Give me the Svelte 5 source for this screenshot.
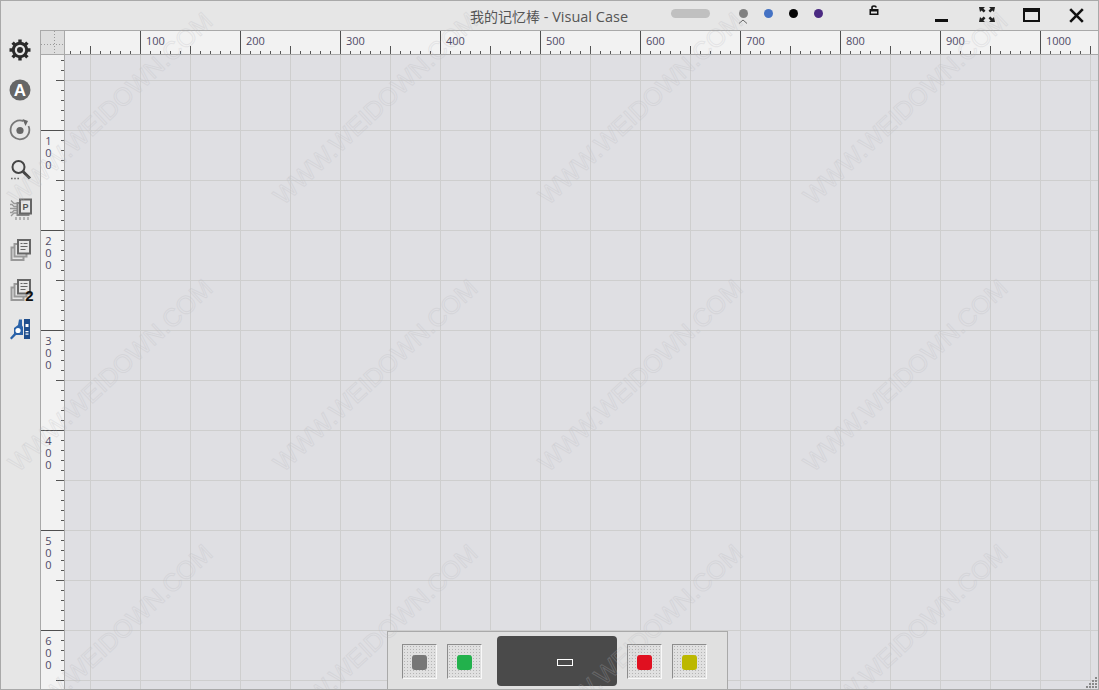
<script>
  // ruler origin is x=40, y=30 in window coordinates
  const hTicks = [];
  for (let x = 70; x < 1099; x += 10) {
    const v = x - 40;
    hTicks.push({ x, kind: v % 100 === 0 ? "major" : v % 50 === 0 ? "half" : "minor" });
  }
  const hLabels = [];
  for (let v = 100; v <= 1000; v += 100) hLabels.push(v);

  const vTicks = [];
  for (let y = 60; y < 689; y += 10) {
    const v = y - 30;
    vTicks.push({ y, kind: v % 100 === 0 ? "major" : v % 50 === 0 ? "half" : "minor" });
  }
  const vLabels = [100, 200, 300, 400, 500, 600];

  const tickLen = { major: 24, half: 8, minor: 3 };

  const swatchesLeft = ["#777777", "#22b14c"];
  const swatchesRight = ["#e01020", "#bcb800"];

  const marks = [];
  for (const cy of [108, 375, 640]) {
    for (const cx of [110, 375, 640, 905]) marks.push({ cx, cy });
  }

  const grip = [
    [9, 0],
    [6, 3], [9, 3],
    [3, 6], [6, 6], [9, 6],
    [0, 9], [3, 9], [6, 9], [9, 9]
  ];
</script>

<div class="window">
  <header class="titlebar">
    <span class="title">我的记忆棒<span class="latin">{" - Visual Case"}</span></span>
    <span class="pill"></span>
    <span class="handle">
      <i class="dot grey"></i>
      <svg width="10" height="5" viewBox="0 0 10 5"><path d="M1 4.5 5 1l4 3.5" fill="none" stroke="#666" /></svg>
    </span>
    <i class="dot blue"></i>
    <i class="dot black"></i>
    <i class="dot purple"></i>
    <svg class="lock" width="10" height="10" viewBox="0 0 10 10">
      <path d="M3 4.500V2.500Q3 1 5 1t2 1.500" fill="none" stroke="#111" stroke-width="1.6" />
      <path d="M0.5 4h9v6h-9z M2 6.500v2h6v-2z" fill="#111" fill-rule="evenodd" />
    </svg>
    <svg class="min" width="13" height="3"><rect width="13" height="3" fill="#111" /></svg>
    <svg class="full" width="16" height="15" viewBox="0 0 16 15" fill="#222">
      <path d="M0 0h6L4.4 1.6 6.5 3.7 4.7 5.5 2.6 3.4 1 5z" />
      <path d="M16 0h-6l1.6 1.6-2.1 2.1 1.8 1.8 2.1-2.1L15 5z" />
      <path d="M0 15h6l-1.6-1.6 2.1-2.1-1.8-1.8-2.1 2.1L1 10z" />
      <path d="M16 15h-6l1.6-1.6-2.1-2.1 1.8-1.8 2.1 2.1L15 10z" />
    </svg>
    <svg class="max" width="17" height="14" viewBox="0 0 17 14">
      <path d="M0 0h17v14H0z M2 4v8h13V4z" fill="#111" fill-rule="evenodd" />
    </svg>
    <svg class="close" width="15" height="15" viewBox="0 0 15 15">
      <path d="M1.2 1.2l12.6 12.6M13.8 1.2 1.2 13.8" stroke="#111" stroke-width="2.6" />
    </svg>
  </header>

  <div class="body">
    <nav class="tools">
      <!-- settings -->
      <svg viewBox="0 0 24 24">
        <g stroke="#2b2b2b" stroke-width="3.4">
          <path d="M12 1.5v21M1.5 12h21M4.6 4.6l14.8 14.8M19.4 4.6 4.6 19.4" />
        </g>
        <circle cx="12" cy="12" r="8.2" fill="#2b2b2b" />
        <circle cx="12" cy="12" r="5.2" fill="#e6e6e6" />
        <circle cx="12" cy="12" r="3" fill="#2b2b2b" />
      </svg>
      <!-- account -->
      <svg viewBox="0 0 24 24">
        <circle cx="12" cy="12" r="10.5" fill="#666" />
        <text x="12" y="18" class="glyph-a">A</text>
      </svg>
      <!-- sync -->
      <svg viewBox="0 0 24 24">
        <path d="M15.5 3.2A9.4 9.4 0 1 0 20.5 8" fill="none" stroke="#777" stroke-width="1.8" />
        <path d="M14.5 1 20 3l-2.5 5z" fill="#666" />
        <circle cx="12" cy="12.5" r="3.6" fill="#666" />
      </svg>
      <!-- search -->
      <svg viewBox="0 0 24 24">
        <circle cx="10.5" cy="9" r="6" fill="none" stroke="#444" stroke-width="2" />
        <path d="M15 13.5l7 7" stroke="#444" stroke-width="3" />
        <path d="M3 20.5h1.6M6.2 20.5h1.6M9.4 20.5h1.6" stroke="#666" stroke-width="1.6" />
      </svg>
      <!-- chip -->
      <svg viewBox="0 0 24 24">
        <path d="M3 2.5l3 3h6M2 6.5h2l2 2h5M2 10.5h9M2 14.5h2l2-2h5M3 18l3-3h6M8 22v-3M12 22v-3M16 22v-3M20 22v-3" fill="none" stroke="#999" stroke-width="1.3" />
        <rect x="9.5" y="5" width="11" height="12" fill="#e6e6e6" stroke="#888" stroke-width="2" />
        <rect x="12" y="1.5" width="11" height="14" fill="#e6e6e6" stroke="#666" stroke-width="2" />
        <text x="17.5" y="12" class="glyph-p">P</text>
      </svg>
      <!-- pages -->
      <svg viewBox="0 0 24 24">
        <rect x="3.5" y="9.5" width="12" height="12.5" fill="none" stroke="#999" stroke-width="2" />
        <rect x="6.5" y="6" width="12" height="12.5" fill="#e6e6e6" stroke="#999" stroke-width="2" />
        <rect x="10" y="2" width="12" height="13.5" fill="#e6e6e6" stroke="#666" stroke-width="2" />
        <path d="M12.5 5.5h2M15.5 5.5h4M12.5 8.5h7M12.5 11.5h5" stroke="#666" stroke-width="1.1" />
      </svg>
      <!-- pages 2 -->
      <svg viewBox="0 0 24 24" class="overflow">
        <rect x="3.5" y="9.5" width="12" height="12.5" fill="none" stroke="#999" stroke-width="2" />
        <rect x="6.5" y="6" width="12" height="12.5" fill="#e6e6e6" stroke="#999" stroke-width="2" />
        <rect x="10" y="2" width="12" height="13.5" fill="#e6e6e6" stroke="#666" stroke-width="2" />
        <path d="M12.5 5.5h2M15.5 5.5h4M12.5 8.5h7M12.5 11.5h5" stroke="#666" stroke-width="1.1" />
        <text x="21.5" y="23" class="glyph-2">2</text>
      </svg>
      <!-- tool -->
      <svg viewBox="0 0 24 24">
        <rect x="16" y="1" width="6" height="20" fill="#1f4e8c" />
        <rect x="17.5" y="6" width="3" height="3" fill="#fff" />
        <rect x="17.5" y="13" width="3" height="1.2" fill="#fff" />
        <rect x="17.5" y="15.5" width="3" height="1.2" fill="#fff" />
        <path d="M11 1.5h3v6l1 1.5v8H8l-4.500 4.500L2 20l4-4.500V10l4-3z" fill="#2a62a8" />
        <circle cx="10" cy="12.5" r="2.6" fill="#fff" />
      </svg>
    </nav>

    <div class="stage">
      <div class="top-row">
        <div class="corner"></div>
        <svg class="hruler" width="1034" height="23" viewBox="65 31 1034 23">
          {#each hTicks as t}
            <line class={t.kind} x1={t.x + 0.5} x2={t.x + 0.5} y1={54 - tickLen[t.kind]} y2="54" />
          {/each}
          {#each hLabels as v}
            <text x={v + 46} y="45">{v}</text>
          {/each}
        </svg>
      </div>
      <div class="bottom-row">
        <svg class="vruler" width="23" height="634" viewBox="41 55 23 634">
          {#each vTicks as t}
            <line class={t.kind} y1={t.y + 0.5} y2={t.y + 0.5} x1={64 - tickLen[t.kind]} x2="64" />
          {/each}
          {#each vLabels as v}
            {#each String(v) as ch, i}
              <text x="48.500" y={v + 45 + i * 12} text-anchor="middle">{ch}</text>
            {/each}
          {/each}
        </svg>
        <div class="canvas"></div>
      </div>
    </div>
  </div>

  <div class="palette">
    {#each swatchesLeft as c}
      <div class="well"><span style="background:{c}"></span></div>
    {/each}
    <div class="screen"><span></span></div>
    {#each swatchesRight as c}
      <div class="well"><span style="background:{c}"></span></div>
    {/each}
  </div>

  <svg class="grip" width="11" height="11" viewBox="0 0 11 11">
    {#each grip as [x, y]}
      <rect {x} {y} width="2" height="2" fill="#8a8a8a" />
    {/each}
  </svg>

  <svg class="watermark" width="1099" height="690" viewBox="0 0 1099 690">
    {#each marks as m}
      <text x={m.cx} y={m.cy} dy="9" transform="rotate(-43 {m.cx} {m.cy})" text-anchor="middle">WWW.WEIDOWN.COM</text>
    {/each}
  </svg>
</div>

<style>
  :global(body) {
    margin: 0;
    overflow: hidden;
  }

  .window {
    position: relative;
    box-sizing: border-box;
    width: 1099px;
    height: 690px;
    border: 1px solid #a9a9a9;
    background: #e6e6e6;
    display: flex;
    flex-direction: column;
    overflow: hidden;
    font-family: "Open Sans", "Noto Sans CJK SC", sans-serif;
  }

  .titlebar {
    height: 29px;
    flex: none;
    display: flex;
    align-items: center;
    color: #555;
  }

  .title {
    margin-left: 469px;
    width: 160px;
    flex: none;
    font-size: 14px;
    white-space: pre;
    font-family: "Open Sans", "Noto Sans CJK SC", sans-serif;
  }

  .latin {
    font-size: 14.5px;
  }

  .pill {
    margin-left: 41px;
    width: 39px;
    height: 9px;
    border-radius: 5px;
    background: #c0c0c0;
    margin-top: -4px;
  }

  .handle {
    margin-left: 28px;
    display: flex;
    flex-direction: column;
    align-items: center;
    gap: 1px;
    width: 10px;
    margin-top: 2px;
  }

  .dot {
    display: block;
    width: 9px;
    height: 9px;
    border-radius: 50%;
    flex: none;
  }

  .grey { background: #808080; }

  .blue {
    background: #4472c4;
    margin-left: 16px;
    margin-top: -5px;
  }

  .black {
    background: #050505;
    margin-left: 16px;
    margin-top: -5px;
  }

  .purple {
    background: #4b2a82;
    margin-left: 16px;
    margin-top: -5px;
  }

  .lock {
    margin-left: 46px;
    margin-top: -11px;
  }

  .min {
    margin-left: 56px;
    margin-top: 10px;
  }

  .full {
    margin-left: 31px;
    margin-top: -2px;
  }

  .max {
    margin-left: 28px;
    margin-top: -1px;
  }

  .close {
    margin-left: 29px;
    margin-top: -1px;
  }

  .body {
    flex: 1;
    min-height: 0;
    display: flex;
  }

  .tools {
    width: 39px;
    flex: none;
    box-sizing: border-box;
    padding: 8px 0 0 7px;
    display: flex;
    flex-direction: column;
    gap: 16px;
  }

  .tools svg {
    width: 24px;
    height: 24px;
    display: block;
  }

  .tools svg.overflow {
    overflow: visible;
  }

  .glyph-a {
    font: 700 17px "Liberation Sans", sans-serif;
    fill: #fff;
    text-anchor: middle;
  }

  .glyph-p {
    font: 700 9px "Liberation Sans", sans-serif;
    fill: #555;
    text-anchor: middle;
  }

  .glyph-2 {
    font: 700 15px "Liberation Sans", sans-serif;
    fill: #111;
    text-anchor: middle;
  }

  .stage {
    flex: 1;
    min-width: 0;
    display: flex;
    flex-direction: column;
    border-left: 1px solid #a9a9a9;
    border-top: 1px solid #a9a9a9;
  }

  .top-row {
    height: 23px;
    flex: none;
    display: flex;
    border-bottom: 1px solid #a9a9a9;
  }

  .corner {
    width: 23px;
    flex: none;
    border-right: 1px solid #a9a9a9;
    background-color: #dedede;
    background-image:
      linear-gradient(to right, #999 1px, transparent 1px),
      linear-gradient(to bottom, #999 1px, transparent 1px);
    background-size: 3px 1px, 1px 3px;
    background-position: 0 13px, 13px 0;
    background-repeat: repeat-x, repeat-y;
  }

  .hruler,
  .vruler {
    display: block;
    flex: none;
    background: #f2f2f2;
  }

  .vruler {
    border-right: 1px solid #a9a9a9;
  }

  line {
    stroke: #555;
    stroke-width: 1;
  }

  line.major {
    stroke: #4f4f4f;
  }

  .hruler text,
  .vruler text {
    font: 11px "Open Sans", sans-serif;
    fill: #4f4a66;
  }

  .bottom-row {
    flex: 1;
    min-height: 0;
    display: flex;
  }

  .canvas {
    flex: 1;
    background-color: #dfdfe3;
    background-image:
      linear-gradient(to right, transparent 25px, #cecece 25px, #cecece 26px, transparent 26px),
      linear-gradient(to bottom, transparent 25px, #cecece 25px, #cecece 26px, transparent 26px);
    background-size: 50px 50px;
  }

  .palette {
    position: absolute;
    left: 386px;
    bottom: 0;
    height: 58px;
    box-sizing: border-box;
    border: 1px solid #a9a9a9;
    border-bottom: none;
    background: #e0e0e0;
    padding: 12px 20px 0 14px;
    display: flex;
    align-items: flex-start;
    gap: 10px;
  }

  .well {
    box-sizing: border-box;
    width: 35px;
    height: 35px;
    padding-top: 2px;
    display: flex;
    align-items: center;
    justify-content: center;
    border: 1px solid;
    border-color: #8c8c8c #f8f8f8 #f8f8f8 #8c8c8c;
    background-color: #e0e0e0;
    background-image: radial-gradient(#b4b4b4 0.6px, transparent 0.8px);
    background-size: 3px 3px;
  }

  .well span {
    width: 15px;
    height: 15px;
    border-radius: 3px;
  }

  .screen {
    box-sizing: border-box;
    width: 120px;
    height: 50px;
    margin: -8px 0 0 5px;
    border-radius: 4px;
    background: #4a4a4a;
    display: flex;
    align-items: center;
    justify-content: center;
    padding-top: 3px;
    padding-left: 16px;
  }

  .screen span {
    box-sizing: border-box;
    width: 16px;
    height: 7px;
    border: 1px solid #fff;
  }

  .grip {
    position: absolute;
    right: 1px;
    bottom: 1px;
  }

  .watermark {
    position: absolute;
    left: -1px;
    top: -1px;
    pointer-events: none;
  }

  .watermark text {
    font: 400 25px "Liberation Sans", sans-serif;
    fill: none;
    stroke: rgba(185, 185, 190, 0.26);
    stroke-width: 1;
  }
</style>
